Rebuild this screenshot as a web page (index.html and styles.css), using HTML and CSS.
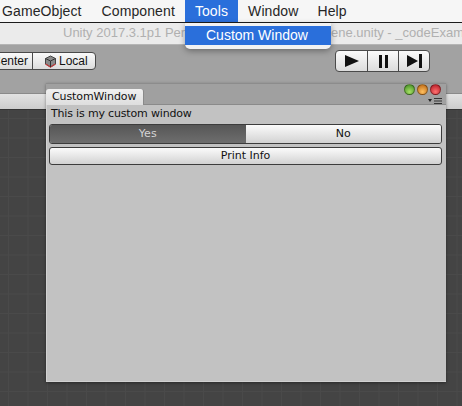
FILE: index.html
```html
<!DOCTYPE html>
<html lang="en">
<head>
    <meta charset="UTF-8">
    <title>Custom Window</title>
    <link rel="stylesheet" href="styles.css">
</head>
<body>
    <!-- Mac menu bar -->
    <nav class="menubar">
        <span class="menu-item first">GameObject</span>
        <span class="menu-item">Component</span>
        <span class="menu-item active">Tools</span>
        <span class="menu-item">Window</span>
        <span class="menu-item">Help</span>
    </nav>

    <!-- the middle of the title is hidden by the Tools dropdown -->
    <div class="titlebar">
        <span class="title-left">Unity 2017.3.1p1 Per</span>
        <span class="title-right">ene.unity - _codeExam</span>
    </div>

    <div class="toolbar">
        <div class="btn-group pivot">
            <span class="pivot-btn center">Center</span>
            <span class="pivot-btn local">
                <svg class="cube" width="13" height="13" viewBox="0 0 13 13">
                    <path d="M6.5 1 L11.5 3.5 V9 L6.5 12 L1.5 9 V3.5 Z" fill="#8a8a8a" stroke="#444" stroke-width="1"/>
                    <path d="M1.5 9 L6.5 12 L11.5 9" fill="none" stroke="#c03a3a" stroke-width="1.2"/>
                    <path d="M1.5 3.5 L6.5 6 L11.5 3.5 M6.5 6 V12" fill="none" stroke="#333" stroke-width="1"/>
                </svg>
                Local
            </span>
        </div>
        <div class="btn-group play">
            <span class="play-btn">
                <svg width="16" height="14" viewBox="0 0 16 14"><path d="M1 1 L15 7 L1 13 Z" fill="#111"/></svg>
            </span>
            <span class="play-btn">
                <svg width="11" height="13" viewBox="0 0 11 13"><path d="M1 0 H4 V13 H1 Z M7 0 H10 V13 H7 Z" fill="#111"/></svg>
            </span>
            <span class="play-btn">
                <svg width="17" height="14" viewBox="0 0 17 14"><path d="M1 1 L12 7 L1 13 Z M13 0 H16 V14 H13 Z" fill="#111"/></svg>
            </span>
        </div>
    </div>

    <div class="scene-tabs"></div>
    <div class="scene"></div>

    <!-- Tools dropdown -->
    <div class="dropdown">
        <div class="dropdown-item">Custom Window</div>
    </div>

    <!-- Floating editor window -->
    <section class="window">
        <div class="window-head">
            <span class="tab">CustomWindow</span>
            <div class="lights">
                <span class="light green"></span>
                <span class="light orange"></span>
                <span class="light red"></span>
            </div>
            <svg class="tab-menu" width="14" height="6" viewBox="0 0 14 6">
                <path d="M0 1 H4 L2 4 Z" fill="#222"/>
                <path d="M6 0.5 H14 M6 3 H14 M6 5.5 H14" stroke="#333" stroke-width="1"/>
            </svg>
        </div>
        <div class="window-body">
            <p class="label">This is my custom window</p>
            <div class="toggle">
                <span class="toggle-btn on">Yes</span>
                <span class="toggle-btn">No</span>
            </div>
            <div class="print-btn">Print Info</div>
        </div>
    </section>
</body>
</html>
```

FILE: styles.css
```css
html, body {
    margin: 0;
    padding: 0;
}

body {
    width: 462px;
    height: 406px;
    overflow: hidden;
    position: relative;
    display: flex;
    flex-direction: column;
    font-family: 'Liberation Sans', Arial, sans-serif;
    background-color: #454545;
}

.menubar {
    height: 22px;
    flex: none;
    display: flex;
    background-color: #f6f6f6;
    border-bottom: 1px solid #1c1c1c;
    font-size: 14px;
    letter-spacing: 0.1px;
    color: #262626;
}

.menu-item {
    padding: 2px 10px 0 10px;
    line-height: 18px;
}

.menu-item.first {
    padding-left: 2px;
    padding-right: 10px;
}

.menu-item.active {
    background-color: #2a6fdb;
    color: #fff;
}

.menu-item:nth-child(4) {
    padding-right: 9px;
}

.titlebar {
    height: 21px;
    flex: none;
    display: flex;
    background-color: #ebebeb;
    border-bottom: 1px solid #b5b5b5;
    white-space: nowrap;
    font-size: 13px;
    line-height: 20px;
    color: #b0b0b0;
    padding-left: 63px;
}

.title-left {
    width: 268px;
}

.title-right {
    width: 131px;
    overflow: hidden;
}

.toolbar {
    height: 48px;
    flex: none;
    display: flex;
    justify-content: space-between;
    align-items: flex-start;
    background-color: #a2a2a2;
    padding: 5px 32px 0 0;
    box-sizing: border-box;
}

.btn-group {
    display: flex;
    border: 1px solid #4a4a4a;
    border-radius: 4px;
    background: linear-gradient(#fafafa, #dcdcdc);
    overflow: hidden;
}

.pivot {
    margin-left: -30px;
    margin-top: 2px;
    height: 16px;
}

.pivot-btn {
    font-size: 12px;
    line-height: 16px;
    color: #111;
    white-space: nowrap;
    display: flex;
    align-items: center;
}

.center {
    width: 62px;
    padding-left: 21px;
    box-sizing: border-box;
    border-right: 1px solid #4a4a4a;
}

.local {
    width: 62px;
    padding-left: 11px;
    gap: 2px;
    box-sizing: border-box;
}

.play {
    height: 20px;
}

.play-btn {
    width: 30px;
    display: flex;
    align-items: center;
    justify-content: center;
    border-left: 1px solid #4a4a4a;
}

.play-btn:first-child {
    width: 31px;
    border-left: none;
}

.scene-tabs {
    height: 17px;
    flex: none;
    background: linear-gradient(#e2e2e2, #cccccc);
    border-top: 1px solid #8a8a8a;
    border-bottom: 1px solid #333;
    box-sizing: border-box;
}

.scene {
    flex: 1;
    background-color: #444444;
    background-image:
        linear-gradient(to right, #4a4a4a 1px, transparent 1px),
        linear-gradient(to bottom, #4a4a4a 1px, transparent 1px);
    background-size: 19.5px 19.5px;
    background-position: 8px 8px;
}

.dropdown {
    position: absolute;
    left: 185px;
    top: 23px;
    width: 146px;
    height: 26px;
    box-sizing: border-box;
    padding-top: 3px;
    background-color: #f2f2f2;
    border-radius: 0 0 5px 5px;
    box-shadow: 0 2px 6px rgba(0, 0, 0, 0.35);
}

.dropdown-item {
    height: 19px;
    line-height: 19px;
    padding-left: 21px;
    background-color: #2a6fdb;
    color: #fff;
    font-size: 14px;
}

.window {
    position: absolute;
    left: 46px;
    top: 83px;
    width: 400px;
    height: 299px;
    display: flex;
    flex-direction: column;
    font-family: 'DejaVu Sans', sans-serif;
    font-size: 11px;
    color: #111;
    box-shadow: 0 1px 3px rgba(0, 0, 0, 0.4);
}

.window-head {
    height: 22px;
    flex: none;
    position: relative;
    background-color: #a0a0a0;
    border-top: 1px solid #8c8c8c;
    box-sizing: border-box;
    border-bottom: 1px solid #8a8a8a;
}

.tab {
    position: absolute;
    left: 0;
    top: 5px;
    width: 98px;
    height: 16px;
    box-sizing: border-box;
    padding-left: 6px;
    line-height: 16px;
    letter-spacing: -0.1px;
    background: linear-gradient(#f0f0f0, #dedede);
    border-radius: 3px 3px 0 0;
    border-right: 1px solid #8a8a8a;
}

.lights {
    position: absolute;
    right: 5px;
    top: 0;
    display: flex;
    gap: 2px;
}

.light {
    width: 11px;
    height: 11px;
    border-radius: 50%;
    border: 1px solid rgba(0, 0, 0, 0.35);
    box-sizing: border-box;
}

.green {
    background: radial-gradient(circle at 50% 75%, #a6e066, #3f8a20);
}

.orange {
    background: radial-gradient(circle at 50% 75%, #ffc060, #b8620e);
}

.red {
    background: radial-gradient(circle at 50% 75%, #ff7070, #b01520);
}

.tab-menu {
    position: absolute;
    right: 4px;
    top: 14px;
}

.window-body {
    flex: 1;
    background-color: #c2c2c2;
    border-left: 1px solid #d2d2d2;
    border-bottom: 1px solid #d2d2d2;
    padding: 0 4px 0 2px;
}

.label {
    margin: 0;
    height: 19px;
    line-height: 18px;
    padding-left: 2px;
    letter-spacing: -0.17px;
}

.toggle {
    display: flex;
    height: 18px;
    border: 1px solid #3c3c3c;
    border-radius: 3px;
    overflow: hidden;
    margin-bottom: 3px;
}

.toggle-btn {
    flex: 1;
    text-align: center;
    line-height: 17px;
    background: linear-gradient(#fbfbfb, #d2d2d2);
}

.toggle-btn.on {
    background: linear-gradient(#565656, #6e6e6e);
    color: #d4d4d4;
}

.print-btn {
    height: 16px;
    border: 1px solid #3c3c3c;
    border-radius: 3px;
    text-align: center;
    line-height: 16px;
    background: linear-gradient(#fbfbfb, #d2d2d2);
}
```
